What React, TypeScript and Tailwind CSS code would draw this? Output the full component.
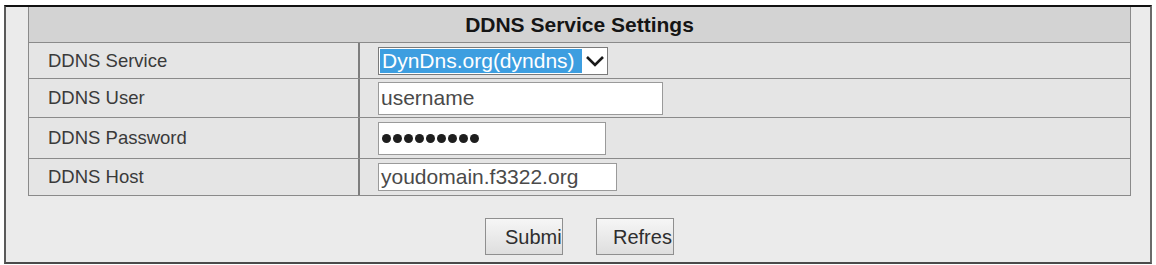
const font = { fontFamily: '"Liberation Sans", Arial, sans-serif' };

function Row({ label, h, border = true, children }: { label: string; h: string; border?: boolean; children: React.ReactNode }) {
  return (
    <div className={`flex ${h} ${border ? "border-b border-[#8a8a8a]" : ""}`}>
      <div className="w-[331px] flex items-center pl-[19px] text-[18.5px] text-[#3a3a3a] border-r-2 border-[#7d7d7d]">
        {label}
      </div>
      <div className="flex-1 flex items-center pl-[18px]">{children}</div>
    </div>
  );
}

export default function App() {
  return (
    <div className="w-[1156px] h-[265px] bg-white pt-[5px] pl-[4px]" style={font}>
      <div className="w-[1148px] h-[259px] bg-[#ebebeb] border-t-2 border-t-[#111] border-l-2 border-r-2 border-b-2 border-l-[#5a5a5a] border-r-[#6a6a6a] border-b-[#4a4a4a] pl-[22px] pr-[19px]">
        {/* Settings table */}
        <div className="border-l border-r border-b border-[#8a8a8a] bg-[#e5e5e5]">
          <div className="h-[36px] bg-[#d3d3d3] border-b border-[#8a8a8a] flex items-center justify-center text-[21px] font-bold text-[#151515]">
            DDNS Service Settings
          </div>
          <Row label="DDNS Service" h="h-[36px]">
            <div className="w-[230px] h-[28px] border border-[#7a7a7a] bg-white flex items-center p-[1px]">
              <div className="h-full w-[202px] bg-[#3d9ee0] text-white text-[21px] leading-none flex items-center pl-[2px] whitespace-nowrap">
                DynDns.org(dyndns)
              </div>
              <svg width="22" height="14" viewBox="0 0 22 14" className="ml-[2px]">
                <path d="M3 3 L11 11 L19 3" fill="none" stroke="#1a1a1a" strokeWidth="2.6" />
              </svg>
            </div>
          </Row>
          <Row label="DDNS User" h="h-[39px]">
            <div className="w-[285px] h-[33px] border border-[#9a9a9a] bg-white flex items-center pl-[2px] text-[21px] text-[#4a4a4a]">
              username
            </div>
          </Row>
          <Row label="DDNS Password" h="h-[41px]">
            <div className="w-[228px] h-[33px] border border-[#9a9a9a] bg-white flex items-center pl-[3px] gap-[2px]">
              {Array.from({ length: 9 }).map((_, i) => (
                <span key={i} className="w-[9px] h-[9px] rounded-full bg-[#1e1e1e]" />
              ))}
            </div>
          </Row>
          <Row label="DDNS Host" h="h-[36px]" border={false}>
            <div className="w-[239px] h-[28px] border border-[#9a9a9a] bg-white flex items-center pl-[2px] text-[21px] text-[#4a4a4a]">
              youdomain.f3322.org
            </div>
          </Row>
        </div>

        {/* Buttons */}
        <div className="flex justify-center gap-[33px] pt-[22px]">
          <button className="w-[78px] h-[37px] border border-[#8f8f8f] bg-gradient-to-b from-[#f6f6f6] to-[#dedede] whitespace-nowrap text-left pl-[19px] text-[20px] text-[#2e2e2e]">
            Submi
          </button>
          <button className="w-[78px] h-[37px] border border-[#8f8f8f] bg-gradient-to-b from-[#f6f6f6] to-[#dedede] whitespace-nowrap text-left pl-[16px] text-[20px] text-[#2e2e2e]">
            Refres
          </button>
        </div>
      </div>
    </div>
  );
}
